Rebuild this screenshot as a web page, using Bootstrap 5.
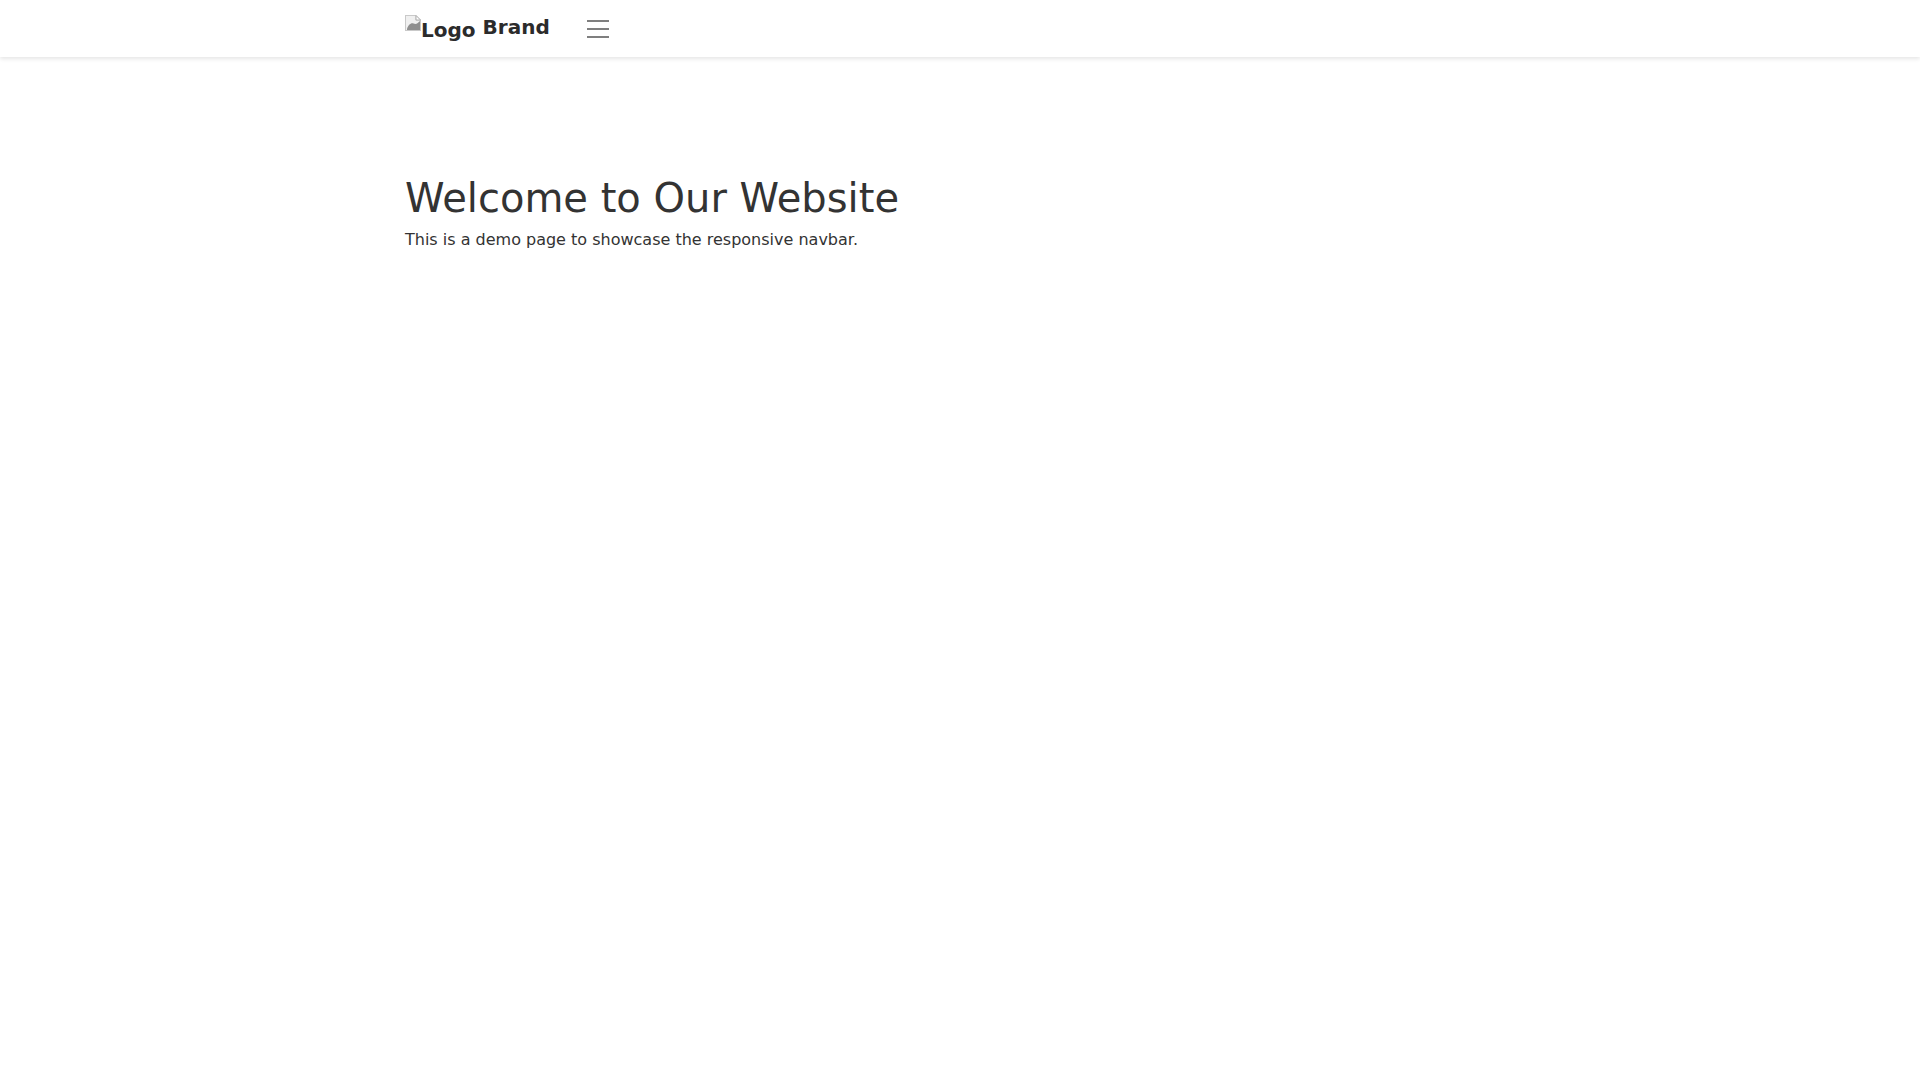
<!DOCTYPE html>
<html lang="en">
<head>
<meta charset="utf-8">
<title>Welcome</title>
<link href="https://cdn.jsdelivr.net/npm/bootstrap@5.3.0/dist/css/bootstrap.min.css" rel="stylesheet">
<style>
body { font-family: "DejaVu Sans", sans-serif; color: #333; }
.site-nav { height: 57px; box-shadow: 0 2px 4px rgba(0,0,0,.1); }
.site-wrap { max-width: 1140px; margin-inline: auto; padding-inline: 15px; width: 100%; }
.brand-link { font-size: 20px; line-height: 30px; height: 31px; color: #2b2b2b; text-decoration: none; margin-right: 32px; }
.broken-logo { width: 16px; height: 16px; flex: none; margin-top: 2px; }
.logo-alt { margin-top: 2px; margin-right: 7px; }
.brand-word { margin-top: -1px; }
.menu-btn { width: 30px; height: 30px; line-height: 0; margin-left: 1px; }
.page-main { padding-top: 117px; }
.page-main h1 { font-size: 40px; margin-bottom: 6px; }
</style>
</head>
<body>
<nav class="bg-white site-nav d-flex align-items-center">
  <div class="site-wrap d-flex align-items-center">
    <a class="fw-bold d-flex align-items-start brand-link" href="#">
      <svg class="broken-logo" viewBox="0 0 16 16"><path d="M0 0h11l5 5v11H0z" fill="#c9c9c9"/><path d="M1 1h9.500v4.500H15V15H1z" fill="#f0f0f0"/><path d="M2 14c1-4 4-6.500 6.500-5.500S12 9 15 6v9H2z" fill="#8f8f8f"/><path d="M11 .5v4.500h4.500z" fill="#fff" stroke="#b0b0b0"/></svg>
      <span class="logo-alt">Logo</span>
      <span class="brand-word">Brand</span>
    </a>
    <button class="btn p-0 border-0 menu-btn" type="button" aria-label="Toggle navigation">
      <svg width="30" height="30" viewBox="0 0 30 30"><path d="M4 7h22M4 15h22M4 23h22" stroke="rgba(0,0,0,.5)" stroke-width="2" stroke-miterlimit="10" fill="none"/></svg>
    </button>
  </div>
</nav>
<main class="site-wrap page-main">
  <h1>Welcome to Our Website</h1>
  <p>This is a demo page to showcase the responsive navbar.</p>
</main>
<script src="https://cdn.jsdelivr.net/npm/bootstrap@5.3.0/dist/js/bootstrap.bundle.min.js"></script>
</body>
</html>
